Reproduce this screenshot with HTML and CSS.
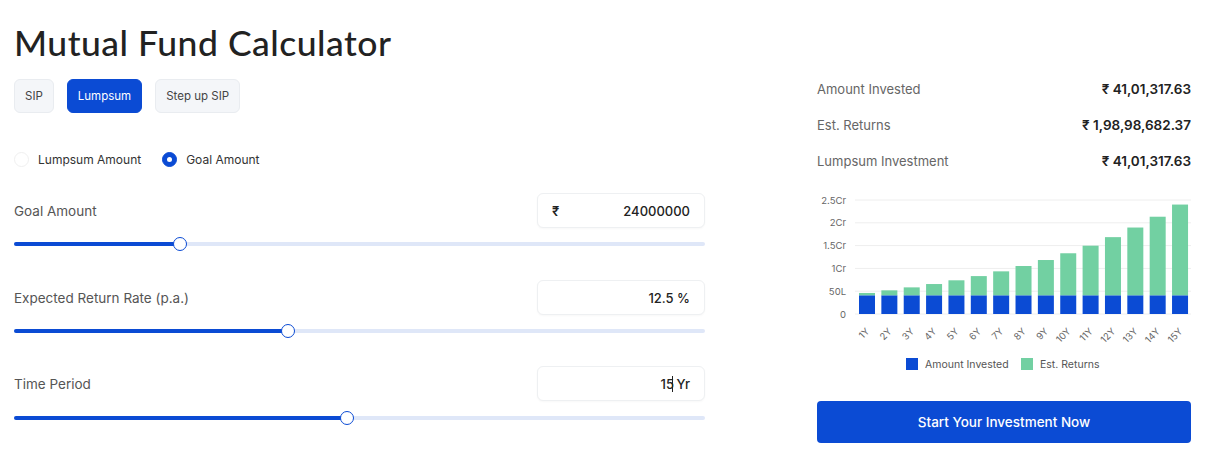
FILE: index.html
```html
<!DOCTYPE html>
<html lang="en">
<head>
<meta charset="utf-8">
<title>Mutual Fund Calculator</title>
<link rel="stylesheet" href="styles.css">
</head>
<body>
<div class="page">
  <h1 class="title">Mutual Fund Calculator</h1>
  <div class="layout">
    <section class="left">
      <div class="tabs">
        <button class="tab">SIP</button>
        <button class="tab active">Lumpsum</button>
        <button class="tab">Step up SIP</button>
      </div>
      <div class="radios">
        <label class="radio"><span class="dot"></span>Lumpsum Amount</label>
        <label class="radio"><span class="dot checked"></span>Goal Amount</label>
      </div>
      <div class="field f1">
        <div class="field-row">
          <span class="field-label">Goal Amount</span>
          <div class="input"><span class="cur">₹</span><span class="val">24000000</span></div>
        </div>
        <div class="slider"><div class="fill" style="width:24%"></div><span class="thumb" style="left:24%"></span></div>
      </div>
      <div class="field f2">
        <div class="field-row">
          <span class="field-label">Expected Return Rate (p.a.)</span>
          <div class="input"><span class="val">12.5 %</span></div>
        </div>
        <div class="slider"><div class="fill" style="width:39.6%"></div><span class="thumb" style="left:39.6%"></span></div>
      </div>
      <div class="field f3">
        <div class="field-row">
          <span class="field-label">Time Period</span>
          <div class="input"><span class="val">15<span class="caret"></span> Yr</span></div>
        </div>
        <div class="slider"><div class="fill" style="width:48.2%"></div><span class="thumb" style="left:48.2%"></span></div>
      </div>
    </section>
    <aside class="right">
      <div class="stat"><span class="stat-label">Amount Invested</span><span class="stat-val">₹ 41,01,317.63</span></div>
      <div class="stat"><span class="stat-label">Est. Returns</span><span class="stat-val">₹ 1,98,98,682.37</span></div>
      <div class="stat"><span class="stat-label">Lumpsum Investment</span><span class="stat-val">₹ 41,01,317.63</span></div>
      <svg class="chart" width="376" height="185" viewBox="0 0 376 185">
        <g class="grid">
          <line x1="38" y1="10" x2="374" y2="10"/>
          <line x1="38" y1="32.8" x2="374" y2="32.8"/>
          <line x1="38" y1="55.6" x2="374" y2="55.6"/>
          <line x1="38" y1="78.4" x2="374" y2="78.4"/>
          <line x1="38" y1="101.2" x2="374" y2="101.2"/>
          <line x1="38" y1="124" x2="374" y2="124"/>
        </g>
        <g class="ylab">
          <text x="29" y="13.5">2.5Cr</text>
          <text x="29" y="36.3">2Cr</text>
          <text x="29" y="59.1">1.5Cr</text>
          <text x="29" y="81.9">1Cr</text>
          <text x="29" y="104.7">50L</text>
          <text x="29" y="127.5">0</text>
        </g>
        <g class="inv">
          <rect x="42" y="105.3" width="16" height="18.7"/>
          <rect x="64.36" y="105.3" width="16" height="18.7"/>
          <rect x="86.72" y="105.3" width="16" height="18.7"/>
          <rect x="109.08" y="105.3" width="16" height="18.7"/>
          <rect x="131.44" y="105.3" width="16" height="18.7"/>
          <rect x="153.8" y="105.3" width="16" height="18.7"/>
          <rect x="176.16" y="105.3" width="16" height="18.7"/>
          <rect x="198.52" y="105.3" width="16" height="18.7"/>
          <rect x="220.88" y="105.3" width="16" height="18.7"/>
          <rect x="243.24" y="105.3" width="16" height="18.7"/>
          <rect x="265.6" y="105.3" width="16" height="18.7"/>
          <rect x="287.96" y="105.3" width="16" height="18.7"/>
          <rect x="310.32" y="105.3" width="16" height="18.7"/>
          <rect x="332.68" y="105.3" width="16" height="18.7"/>
          <rect x="355.04" y="105.3" width="16" height="18.7"/>
        </g>
        <g class="ret">
          <rect x="42" y="102.96" width="16" height="2.34"/>
          <rect x="64.36" y="100.33" width="16" height="4.97"/>
          <rect x="86.72" y="97.37" width="16" height="7.93"/>
          <rect x="109.08" y="94.04" width="16" height="11.26"/>
          <rect x="131.44" y="90.3" width="16" height="15"/>
          <rect x="153.8" y="86.09" width="16" height="19.21"/>
          <rect x="176.16" y="81.35" width="16" height="23.95"/>
          <rect x="198.52" y="76.01" width="16" height="29.29"/>
          <rect x="220.88" y="70.02" width="16" height="35.28"/>
          <rect x="243.24" y="63.27" width="16" height="42.03"/>
          <rect x="265.6" y="55.68" width="16" height="49.62"/>
          <rect x="287.96" y="47.14" width="16" height="58.16"/>
          <rect x="310.32" y="37.53" width="16" height="67.77"/>
          <rect x="332.68" y="26.72" width="16" height="78.58"/>
          <rect x="355.04" y="14.56" width="16" height="90.74"/>
        </g>
        <g class="xlab">
          <text x="53" y="142" transform="rotate(-45 53 142)">1Y</text>
          <text x="75.36" y="142" transform="rotate(-45 75.36 142)">2Y</text>
          <text x="97.72" y="142" transform="rotate(-45 97.72 142)">3Y</text>
          <text x="120.08" y="142" transform="rotate(-45 120.08 142)">4Y</text>
          <text x="142.44" y="142" transform="rotate(-45 142.44 142)">5Y</text>
          <text x="164.8" y="142" transform="rotate(-45 164.8 142)">6Y</text>
          <text x="187.16" y="142" transform="rotate(-45 187.16 142)">7Y</text>
          <text x="209.52" y="142" transform="rotate(-45 209.52 142)">8Y</text>
          <text x="231.88" y="142" transform="rotate(-45 231.88 142)">9Y</text>
          <text x="254.24" y="142" transform="rotate(-45 254.24 142)">10Y</text>
          <text x="276.6" y="142" transform="rotate(-45 276.6 142)">11Y</text>
          <text x="298.96" y="142" transform="rotate(-45 298.96 142)">12Y</text>
          <text x="321.32" y="142" transform="rotate(-45 321.32 142)">13Y</text>
          <text x="343.68" y="142" transform="rotate(-45 343.68 142)">14Y</text>
          <text x="366.04" y="142" transform="rotate(-45 366.04 142)">15Y</text>
        </g>
        <g class="legend">
          <rect class="leg-inv" x="89" y="168" width="12" height="12"/>
          <text x="108" y="178">Amount Invested</text>
          <rect class="leg-ret" x="204" y="168" width="12" height="12"/>
          <text x="223" y="178">Est. Returns</text>
        </g>
      </svg>
      <button class="cta">Start Your Investment Now</button>
    </aside>
  </div>
</div>
</body>
</html>
```

FILE: styles.css
```css
* { box-sizing: border-box; }
html, body { margin: 0; padding: 0; background: #fff; }
body { font-family: Inter, "Noto Sans", Arial, sans-serif; color: #222; }

.page { padding: 0 16px 0 14px; }

.title {
  margin: 0;
  padding-top: 22px;
  font-family: Lato, Inter, sans-serif;
  font-weight: 500;
  font-size: 35.5px;
  line-height: 42px;
  color: #222;
  letter-spacing: 0.5px;
}

.layout {
  display: grid;
  grid-template-columns: 691px 374px;
  column-gap: 112px;
  margin-top: 7px;
}

.left { display: flex; flex-direction: column; padding-top: 8px; }

.tabs { display: flex; gap: 13px; }
.tab {
  height: 34px;
  padding: 0 10px;
  border: 1px solid #e9ecf0;
  border-radius: 6px;
  background: #f4f6f9;
  font-family: Inter, sans-serif;
  font-size: 11.5px;
  color: #444;
}
.tab.active { background: #0b4bd4; border-color: #0b4bd4; color: #fff; }

.radios { display: flex; gap: 21px; margin-top: 37px; height: 18px; align-items: center; }
.radio { display: flex; align-items: center; gap: 9px; font-size: 12px; color: #333; }
.dot {
  width: 15px; height: 15px; border-radius: 50%;
  border: 1px solid #f0f0f0; background: #fff;
  position: relative;
}
.dot.checked { background: #0b4bd4; border-color: #0b4bd4; }
.dot.checked::after {
  content: ""; position: absolute; left: 50%; top: 50%;
  width: 5px; height: 5px; margin: -2.5px 0 0 -2.5px;
  border-radius: 50%; background: #fff;
}

.field.f1 { margin-top: 25px; }
.field.f2 { margin-top: 29px; }
.field.f3 { margin-top: 28px; }
.field-row { display: flex; justify-content: space-between; align-items: center; }
.field-label { font-size: 13.5px; color: #555; }
.input {
  width: 168px; height: 35px;
  border: 1px solid #eef0f2; border-radius: 6px; background: #fff;
  box-shadow: 0 1px 2px rgba(0,0,0,0.03);
  display: flex; align-items: center; justify-content: flex-end;
  padding: 0 14px; position: relative;
  font-size: 13px; font-weight: 500; color: #222;
}
.cur { position: absolute; left: 14px; font-weight: 600; }
.caret { display: inline-block; width: 1px; height: 16px; background: #222; vertical-align: -3px; margin: 0 0 0 -2px; }

.slider {
  position: relative; margin-top: 9px; height: 14px;
  display: flex; align-items: center;
}
.f3 .slider { margin-top: 10px; }
.slider::before {
  content: ""; position: absolute; left: 0; right: 0; top: 5px; height: 4px;
  border-radius: 2px; background: #dfe7f8;
}
.fill { position: relative; height: 4px; border-radius: 2px; background: #0b4bd4; }
.thumb {
  position: absolute; top: 0; width: 14px; height: 14px; margin-left: -7px;
  border-radius: 50%; background: #fff; border: 1.5px solid #0b4bd4;
}

.right { display: flex; flex-direction: column; }
.stat { height: 36px; display: flex; justify-content: space-between; align-items: center; }
.stat-label { font-size: 13px; color: #666; }
.stat-val { font-size: 13.5px; font-weight: 600; color: #222; }

.chart { display: block; margin-top: 11px; font-family: Inter, Arial, sans-serif; }
.grid line { stroke: #eeeeee; stroke-width: 1; }
.ylab text { font-size: 9.5px; fill: #666; text-anchor: end; }
.xlab text { font-size: 9.5px; fill: #666; text-anchor: end; }
.inv rect, .leg-inv { fill: #0b4bd4; }
.ret rect, .leg-ret { fill: #72d0a2; }
.legend text { font-size: 10.5px; fill: #555; }

.cta {
  margin-top: 26px; height: 42px; width: 100%;
  border: none; border-radius: 4px; background: #0b4bd4;
  color: #fff; font-family: Inter, sans-serif; font-size: 13.5px; font-weight: 500;
}
```
